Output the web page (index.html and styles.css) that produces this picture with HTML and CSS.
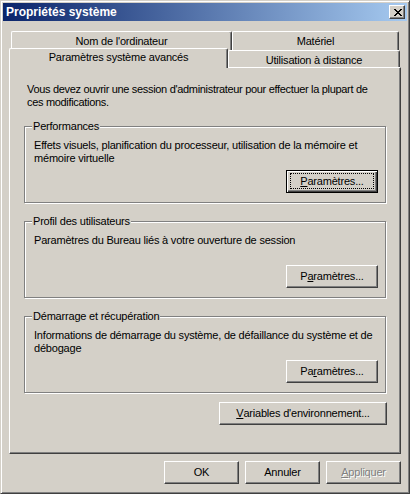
FILE: index.html
```html
<!DOCTYPE html>
<html lang="fr">
<head>
<meta charset="utf-8">
<title>Propriétés système</title>
<link rel="stylesheet" href="styles.css">
</head>
<body>
<div class="window">
  <div class="titlebar">
    <span class="title">Propriétés système</span>
    <button class="close" aria-label="Fermer">
      <svg width="8" height="7" viewBox="0 0 8 7" shape-rendering="crispEdges">
        <path d="M0 0h2v1H0zM6 0h2v1H6zM1 1h2v1H1zM5 1h2v1H5zM2 2h4v1H2zM3 3h2v1H3zM2 4h4v1H2zM1 5h2v1H1zM5 5h2v1H5zM0 6h2v1H0zM6 6h2v1H6z" fill="#000"/>
      </svg>
    </button>
  </div>
  <div class="client">
    <div class="tabs">
      <div class="tabrow back">
        <div class="tab t-nom">Nom de l'ordinateur</div>
        <div class="tab t-mat">Matériel</div>
      </div>
      <div class="tabrow front">
        <div class="tab sel">Paramètres système avancés</div>
        <div class="tab t-util">Utilisation à distance</div>
      </div>
    </div>
    <div class="panel">
      <p class="intro">Vous devez ouvrir une session d'administrateur pour effectuer la plupart de ces modifications.</p>
      <div class="group">
        <span class="legend">Performances</span>
        <p class="gtext">Effets visuels, planification du processeur, utilisation de la mémoire et mémoire virtuelle</p>
        <button class="btn param focused"><span class="focus"><u>P</u>aramètres...</span></button>
      </div>
      <div class="group">
        <span class="legend">Profil des utilisateurs</span>
        <p class="gtext">Paramètres du Bureau liés à votre ouverture de session</p>
        <button class="btn param">P<u>a</u>ramètres...</button>
      </div>
      <div class="group">
        <span class="legend">Démarrage et récupération</span>
        <p class="gtext">Informations de démarrage du système, de défaillance du système et de débogage</p>
        <button class="btn param">Pa<u>r</u>amètres...</button>
      </div>
      <div class="envrow">
        <button class="btn env"><u>V</u>ariables d'environnement...</button>
      </div>
    </div>
    <div class="footer">
      <button class="btn std">OK</button>
      <button class="btn std">Annuler</button>
      <button class="btn std disabled"><u>A</u>ppliquer</button>
    </div>
  </div>
</div>
</body>
</html>
```

FILE: styles.css
```css
* {
  box-sizing: border-box;
}

html,
body {
  margin: 0;
  padding: 0;
}

body {
  width: 410px;
  height: 494px;
  overflow: hidden;
  background: #d4d0c8;
  font-family: "Liberation Sans", Arial, sans-serif;
  font-size: 11px;
  line-height: 13px;
  letter-spacing: -0.2px;
  color: #000;
}

.window {
  width: 410px;
  height: 494px;
  background: #d4d0c8;
  border: 1px solid;
  border-color: #d4d0c8 #404040 #404040 #d4d0c8;
  box-shadow: inset 1px 1px 0 #fff, inset -1px -1px 0 #808080;
  padding: 2px;
  display: flex;
  flex-direction: column;
}

.titlebar {
  height: 18px;
  flex: none;
  background: linear-gradient(to right, #0a246a, #a6caf0);
  display: flex;
  align-items: center;
  padding: 0 2px 0 3px;
}

.title {
  flex: 1;
  color: #fff;
  font-weight: bold;
  font-size: 12px;
  letter-spacing: 0;
  white-space: nowrap;
}

.close {
  width: 16px;
  height: 14px;
  padding: 0 0 0 2px;
  margin: 0;
  background: #d4d0c8;
  border: 1px solid;
  border-color: #fff #404040 #404040 #fff;
  box-shadow: inset -1px -1px 0 #808080;
  display: flex;
  align-items: center;
  justify-content: center;
}

.close svg {
  display: block;
}

.client {
  flex: 1;
  display: flex;
  flex-direction: column;
  padding: 10px 6px 0;
}

.tabs {
  height: 36px;
  flex: none;
  display: flex;
  flex-direction: column;
}

.tabrow {
  display: flex;
  align-items: flex-start;
}

.tabrow.back {
  height: 19px;
  padding-left: 2px;
}

.tabrow.front {
  height: 17px;
}

.tab {
  background: #d4d0c8;
  border-top: 1px solid #fff;
  border-left: 1px solid #fff;
  border-right: 1px solid #404040;
  box-shadow: inset -1px 0 0 #808080;
  border-top-left-radius: 2px;
  border-top-right-radius: 2px;
  text-align: center;
  white-space: nowrap;
}

.tabrow.back .tab {
  height: 19px;
  padding-top: 3px;
}

.t-nom {
  width: 221px;
}

.t-mat {
  width: 167px;
}

.tab.sel {
  width: 219px;
  height: 20px;
  margin-top: -2px;
  margin-bottom: -1px;
  padding-top: 2px;
  position: relative;
  z-index: 1;
}

.t-util {
  width: 172px;
  height: 17px;
  padding-top: 3px;
}

.panel {
  height: 387px;
  flex: none;
  border: 1px solid;
  border-color: #fff #404040 #404040 #fff;
  box-shadow: inset -1px -1px 0 #808080;
  padding: 15px 13px 0 14px;
  display: flex;
  flex-direction: column;
}

.intro {
  margin: 0 0 17px;
  padding-left: 3px;
  padding-right: 10px;
  letter-spacing: -0.32px;
}

.group {
  position: relative;
  width: 362px;
  height: 77px;
  flex: none;
  border: 1px solid #808080;
  box-shadow: inset 1px 1px 0 #fff, 1px 1px 0 #fff;
  padding: 12px 7px 9px 9px;
  display: flex;
  flex-direction: column;
  margin-bottom: 18px;
}

.group:nth-of-type(3) {
  margin-bottom: 9px;
}

.legend {
  position: absolute;
  left: 7px;
  top: -7px;
  padding: 0 1px;
  background: #d4d0c8;
  white-space: nowrap;
}

.gtext {
  margin: 0;
}

.btn {
  font: inherit;
  letter-spacing: inherit;
  color: #000;
  background: #d4d0c8;
  height: 23px;
  padding: 0;
  margin: 0;
  border: 1px solid;
  border-color: #fff #404040 #404040 #fff;
  box-shadow: inset -1px -1px 0 #808080;
  display: flex;
  align-items: center;
  justify-content: center;
  white-space: nowrap;
  position: relative;
}

.btn u {
  text-underline-offset: 1px;
}

.param {
  width: 92px;
  margin-top: auto;
  align-self: flex-end;
}

.btn.focused {
  border: 1px solid #000;
  box-shadow: inset 1px 1px 0 #fff, inset -1px -1px 0 #404040, inset -2px -2px 0 #808080;
}

.focus {
  position: absolute;
  left: 3px;
  top: 2px;
  right: 3px;
  bottom: 3px;
  border: 1px dotted #000;
  display: flex;
  align-items: center;
  justify-content: center;
}

.envrow {
  display: flex;
  justify-content: flex-end;
}

.env {
  width: 168px;
}

.footer {
  display: flex;
  justify-content: flex-end;
  gap: 6px;
  margin-top: 7px;
}

.std {
  width: 75px;
}

.disabled {
  color: #808080;
  text-shadow: 1px 1px 0 #fff;
}
```
